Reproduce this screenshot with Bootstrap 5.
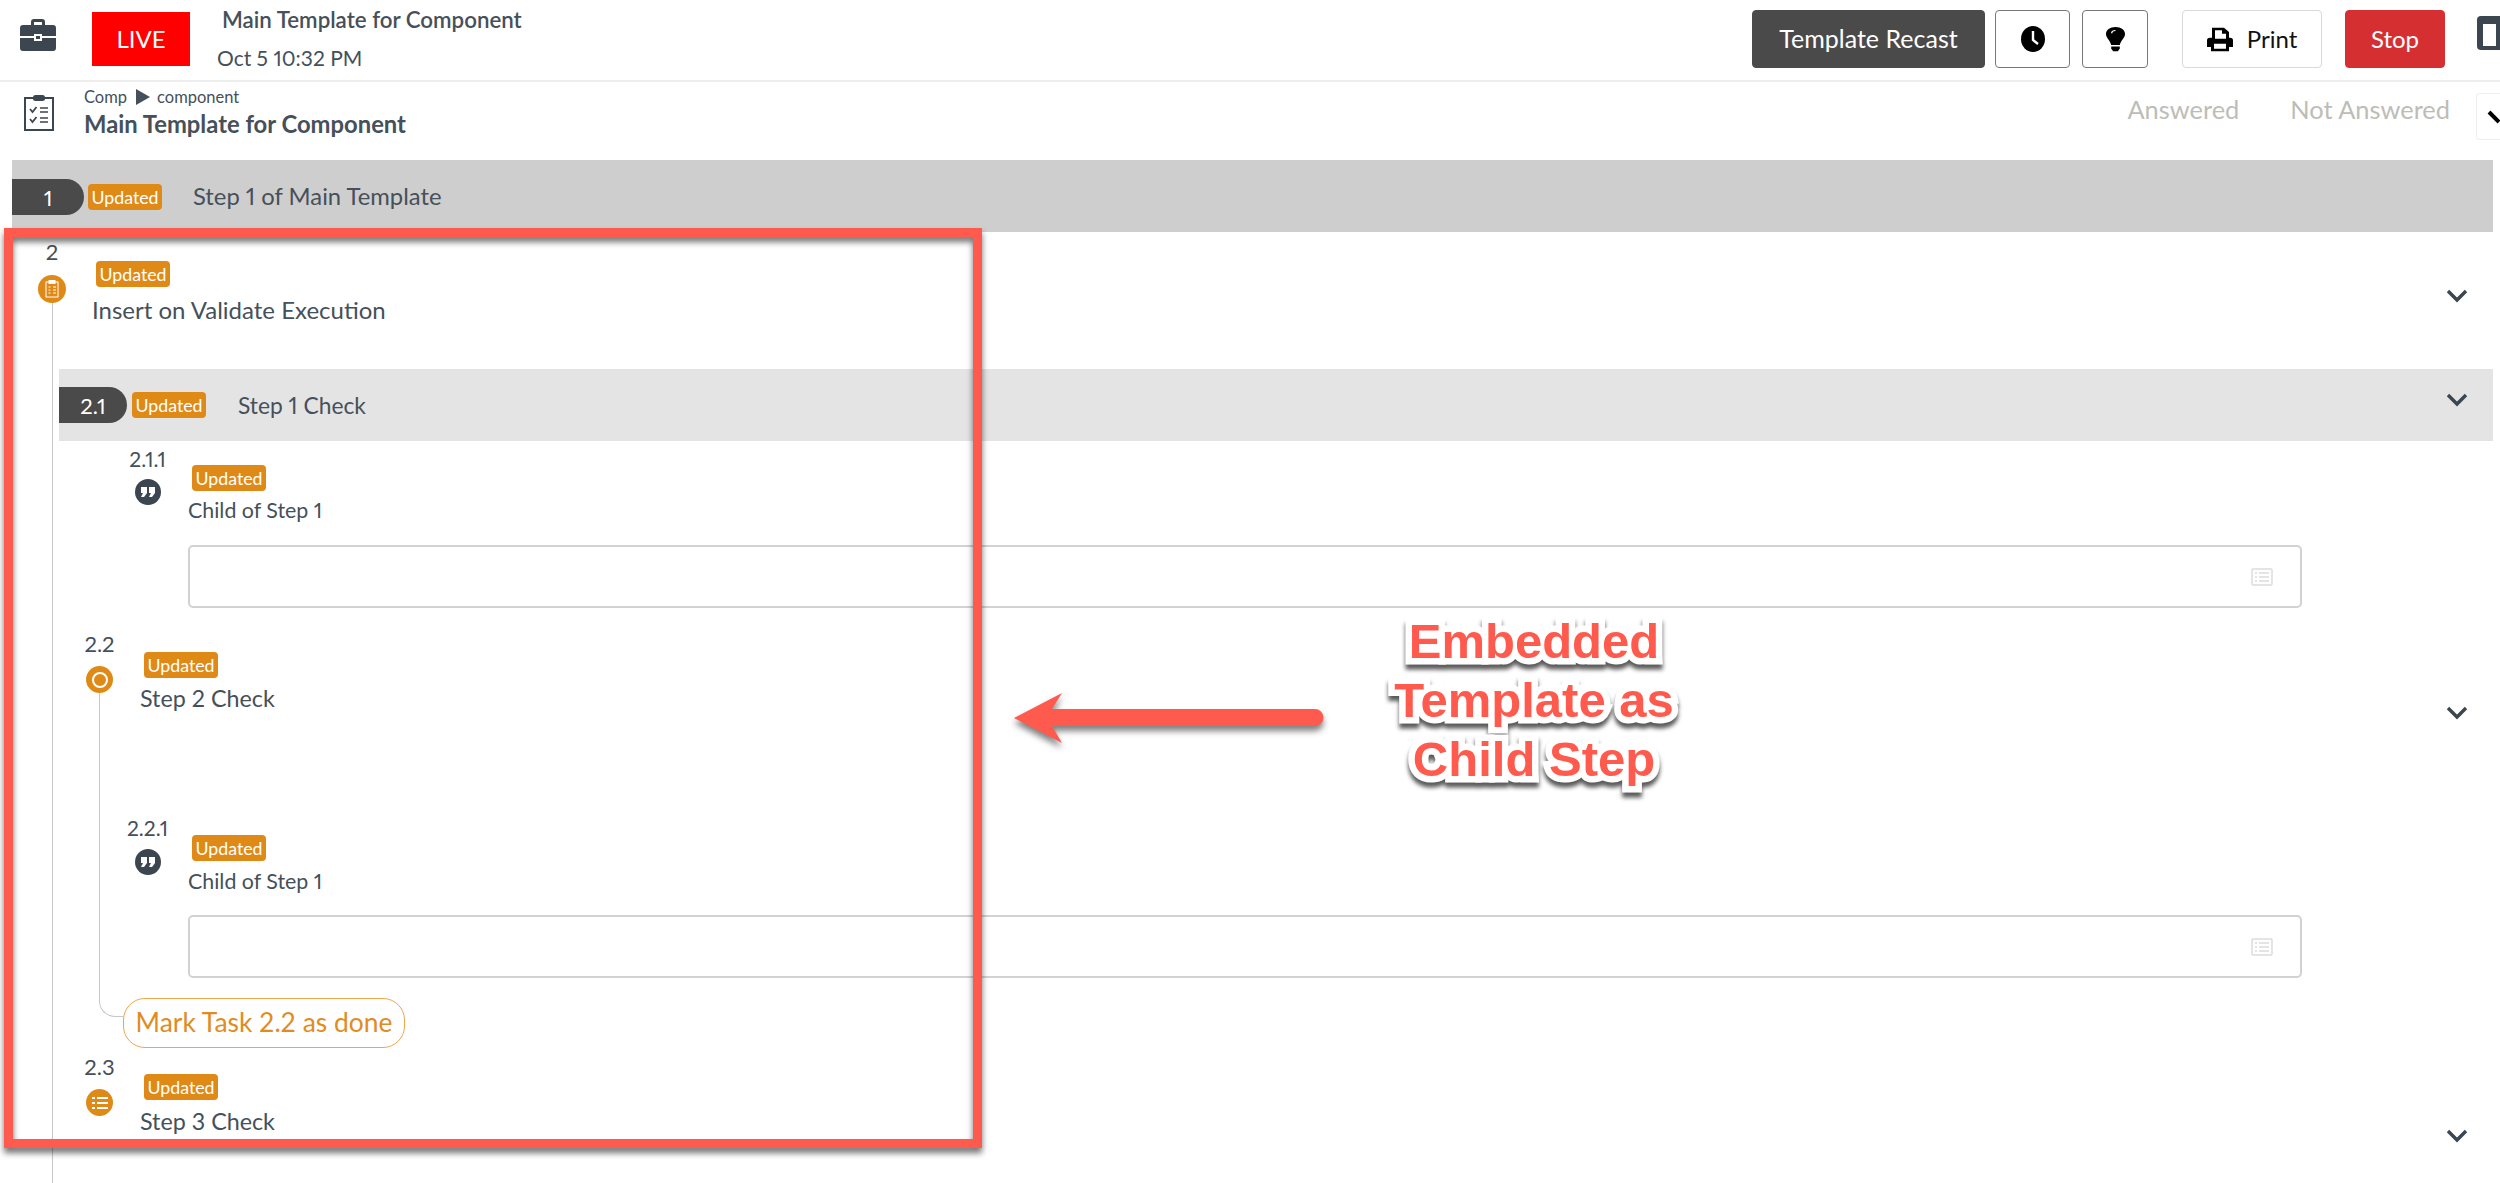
<!doctype html>
<html lang="en"><head><meta charset="utf-8"><title>Main Template for Component</title>
<link href="https://cdn.jsdelivr.net/npm/bootstrap@5.3.0/dist/css/bootstrap.min.css" rel="stylesheet">
<style>
html,body{height:1183px;overflow:hidden;background:#fff}
body{font-family:"Lato","Open Sans",sans-serif;color:#46505a;position:relative;font-variant-numeric:proportional-nums}
.topbar{height:82px;border-bottom:2px solid #eee;padding:10px 0 0 20px}
.live-box{width:98px;height:54px;background:#f00;color:#fff;font-size:24px;margin:2px 0 0 36px}
.run-title{font-size:22.3px;font-weight:600;line-height:26px;margin:-3px 0 0 32px}
.run-date{font-size:21px;line-height:26px;margin:12px 0 0 27px}
.tbtn{height:58px;font-size:24px;border-radius:4px;padding:0;display:flex;align-items:center;justify-content:center}
.tb-recast{width:233px;background:#4a4a4a;color:#fff;border:1px solid #4a4a4a;font-size:25px}
.tb-icon{background:#fff;border:1px solid #777}
.tb-print{width:140px;background:#fff;border:1px solid #d9d9d9;color:#111;gap:14px}
.tb-stop{width:100px;background:#d62f32;border:1px solid #d62f32;color:#fff}
.subhead{height:78px;padding:12px 0 0 24px}
.crumb{font-size:16.5px;line-height:20px;margin-top:-7px}
.crumb-tri{width:0;height:0;border-left:14px solid #46505a;border-top:8px solid transparent;border-bottom:8px solid transparent;margin:0 7px 0 9px}
.tmpl-title{font-size:23.8px;font-weight:700;line-height:28px;margin-top:3px}
.filter-txt{color:#bdbdb8;font-size:25.4px;line-height:30px}
.corner-box{width:24px;height:47px;margin:-1px 0 0 26px;border:1px solid #eee;border-right:0;border-radius:4px 0 0 4px}
.frame-main{margin:0 7px 0 12px;position:relative}
.head-bar{display:flex;align-items:center}
.hb-1{height:72px;background:#cecece;padding-top:2px}
.hb-2{height:72px;background:#e4e4e4;margin-left:47px}
.num-pill{background:#4a4a4a;color:#fff;height:36px;border-radius:0 18px 18px 0;display:flex;align-items:center;justify-content:center;font-size:22px}
.upd{background:#df8a16;color:#fff;font-size:17.8px;line-height:26px;height:26px;width:74px;text-align:center;border-radius:4px;flex:none;display:block}
.head-title{font-size:22.8px}
.hb-1 .head-title{font-size:23.8px}
.main-line{position:absolute;left:40px;top:143px;width:1px;background:#c8c8c8;height:880px}
.num-col{width:80px;flex:none;text-align:center}
.num-txt{font-size:22px;line-height:26px}
.ic-circle{border-radius:50%;display:flex;align-items:center;justify-content:center;margin-left:auto;margin-right:auto;position:relative}
.ic-or{background:#df8a16;width:28px;height:28px}
.ic-sm{background:#df8a16;width:27px;height:27px}
.ic-dark{background:#3c4650;width:26px;height:26px}
.step-title{font-size:23.3px;line-height:26px}
.title-lg{font-size:24px}
.sub-title{font-size:21.4px;line-height:26px}
.step-2{height:137px}
.nest{margin-left:47px;position:relative}
.leaf{margin-left:48px}
.leaf .num-col{width:81px}
.leaf .num-txt{font-size:21px;line-height:24px}
.leaf-body{flex:1;margin-right:191px}
.check-box{height:63px;border:2px solid #d2d2d2;border-radius:5px;margin-top:21px;padding-right:27px}
.sub-step .num-col{width:81px}
.chev{flex:none;display:block}
.branch{position:absolute;left:40px;top:61px;width:24px;height:325px;border-left:1.5px solid #c8c8c8;border-bottom:1.5px solid #c8c8c8;border-bottom-left-radius:16px}
.mark-btn{height:50px;width:282px;margin:20px 0 0 64px;border:1px solid #eda64a;border-radius:22px;color:#e08c1e;font-size:26.4px;background:#fff;padding:0;position:relative;display:block}
.red-frame{position:absolute;left:4px;top:228px;width:978px;height:920px;border:9px solid #ff5a4e;filter:drop-shadow(0 5px 3px rgba(0,0,0,.55));pointer-events:none}
.red-arrow{position:absolute;left:1012px;top:688px;filter:drop-shadow(0 5px 3px rgba(0,0,0,.5))}
.callout{position:absolute;left:1334px;top:612px;width:400px;text-align:center;font-family:"Liberation Sans",Arial,sans-serif;font-weight:700;font-size:49px;line-height:59px;color:#ff5a4e;-webkit-text-stroke:13px #fff;paint-order:stroke fill;filter:drop-shadow(0 5px 2px rgba(0,0,0,.65))}
</style></head>
<body>
<header class="topbar d-flex">
  <svg class="mt-2" width="36" height="33" viewBox="0 0 36 33" fill="#3c4650" aria-hidden="true"><path d="M11 7V4a3 3 0 0 1 3-3h8a3 3 0 0 1 3 3v3h-3V4h-8v3z"/><path d="M3 7h30a3 3 0 0 1 3 3v8H22v-2h-8v2H0v-8a3 3 0 0 1 3-3z"/><path d="M0 20h14v3h8v-3h14v10a3 3 0 0 1-3 3H3a3 3 0 0 1-3-3z"/><rect x="16" y="18" width="4" height="3"/></svg>
  <div class="live-box d-flex align-items-center justify-content-center">LIVE</div>
  <div>
    <div class="run-title">Main Template for Component</div>
    <div class="run-date">Oct 5 10:32 PM</div>
  </div>
  <div class="ms-auto d-flex">
    <button class="btn tbtn tb-recast">Template Recast</button>
    <button class="btn tbtn tb-icon" style="width:75px;margin-left:10px" aria-label="History"><svg width="24" height="26" viewBox="0 0 24 26"><ellipse cx="12" cy="13" rx="12" ry="13" fill="#000"/><path d="M12 5v9l5 4" stroke="#fff" stroke-width="2.4" fill="none"/></svg></button>
    <button class="btn tbtn tb-icon" style="width:66px;margin-left:12px" aria-label="Hint"><svg width="19" height="25" viewBox="0 0 20 36" preserveAspectRatio="none" fill="#000"><path d="M10 0C4 0 0 4.500 0 10c0 6 4.500 9 5.500 16h9C15.500 19 20 16 20 10 20 4.500 16 0 10 0z"/><path d="M5.500 28h9v3l-2 4h-5l-2-4z"/><path d="M6 9c0-2.500 2-4 4-4" stroke="#fff" stroke-width="1.500" fill="none"/></svg></button>
    <button class="btn tbtn tb-print" style="margin-left:34px"><svg width="26" height="25" viewBox="0 0 26 30" preserveAspectRatio="none" fill="#000"><path fill-rule="evenodd" d="M5 1h12l5 5v7h1a3 3 0 0 1 3 3v8h-4v5H4v-5H0v-8a3 3 0 0 1 3-3h2zM8 4v10h11V8h-4V4zM7 20v6h12v-6z"/></svg>Print</button>
    <button class="btn tbtn tb-stop" style="margin-left:23px">Stop</button>
    <svg style="margin:6px 0 0 32px" width="23" height="34" viewBox="0 0 23 34" aria-hidden="true"><path d="M23 0H4a4 4 0 0 0-4 4v26a4 4 0 0 0 4 4h19z" fill="#3c4650"/><rect x="6" y="8" width="13" height="22" fill="#fff"/></svg>
  </div>
</header>
<section class="subhead d-flex">
  <svg width="30" height="37" viewBox="0 0 30 37" fill="none" stroke="#3c4650" aria-hidden="true"><rect x="1" y="4" width="28" height="32" stroke-width="2"/><rect x="9" y="1" width="12" height="6" rx="2.500" fill="#3c4650" stroke="none"/><path d="M6 15l2.500 3 4-5M6 25l2.500 3 4-5" stroke-width="1.800"/><path d="M16 14h8M16 18h8M16 24h8M16 28h8" stroke-width="1.500"/></svg>
  <div style="margin-left:30px">
    <div class="crumb d-flex align-items-center">Comp<span class="crumb-tri"></span>component</div>
    <div class="tmpl-title">Main Template for Component</div>
  </div>
  <div class="ms-auto d-flex align-items-start">
    <span class="filter-txt">Answered</span>
    <span class="filter-txt" style="margin-left:51px">Not Answered</span>
    <div class="corner-box"><svg width="23" height="45" viewBox="0 0 23 45"><path d="M12 18l10 10" stroke="#000" stroke-width="4" fill="none"/></svg></div>
  </div>
</section>
<main class="frame-main">
  <div class="head-bar hb-1">
    <div class="num-pill" style="width:72px">1</div>
    <span class="upd ms-1">Updated</span>
    <span class="head-title" style="margin-left:31px">Step 1 of Main Template</span>
  </div>
  <div class="main-line"></div>
  <div class="step-2 d-flex">
    <div class="num-col" style="padding-top:7px">
      <div class="num-txt">2</div>
      <div class="ic-circle ic-or" style="margin-top:10px"><svg width="14" height="18" viewBox="0 0 14 18" fill="none" stroke="#fff"><rect x="1" y="2" width="12" height="15"/><rect x="4" y=".5" width="6" height="3" fill="#fff"/><path d="M3.500 7h2M8 7h3M3.500 10h2M8 10h3M3.500 13h2M8 13h3"/></svg></div>
    </div>
    <div style="padding-top:29px">
      <span class="upd" style="margin-left:4px">Updated</span>
      <div class="step-title title-lg" style="margin-top:10px">Insert on Validate Execution</div>
    </div>
    <svg class="chev ms-auto" style="margin:57px 25px 0 0" width="22" height="14" viewBox="0 0 22 14"><path d="M2 2l9 9 9-9" stroke="#3c4650" stroke-width="3.400" fill="none"/></svg>
  </div>
  <div class="head-bar hb-2">
    <div class="num-pill" style="width:68px">2.1</div>
    <span class="upd" style="margin-left:5px">Updated</span>
    <span class="head-title" style="margin-left:32px">Step 1 Check</span>
    <svg class="chev ms-auto" style="margin:-10px 25px 0 0" width="22" height="14" viewBox="0 0 22 14"><path d="M2 2l9 9 9-9" stroke="#3c4650" stroke-width="3.400" fill="none"/></svg>
  </div>
  <div class="nest">
    <div class="leaf d-flex" style="padding-top:6px">
      <div class="num-col">
        <div class="num-txt">2.1.1</div>
        <div class="ic-circle ic-dark" style="margin-top:8px"><svg width="16" height="12" viewBox="0 0 16 12" fill="#fff"><path d="M1 1h6v6l-3 4H1l2-4H1zM9 1h6v6l-3 4H9l2-4H9z"/></svg></div>
      </div>
      <div class="leaf-body" style="padding-top:18px">
        <span class="upd" style="margin-left:4px">Updated</span>
        <div class="sub-title" style="margin-top:6px">Child of Step 1</div>
        <div class="check-box d-flex align-items-center justify-content-end" style="margin-top:22px"><svg width="22" height="18" viewBox="0 0 22 18" fill="none" stroke="#dcdcdc" stroke-width="1.500"><rect x="1" y="1" width="20" height="16" rx="1"/><path d="M4 5h2M8 5h10M4 9h2M8 9h10M4 13h2M8 13h10"/></svg></div>
      </div>
    </div>
    <div class="sub-step position-relative" style="margin-top:23px">
      <div class="branch"></div>
      <div class="d-flex">
        <div class="num-col">
          <div class="num-txt">2.2</div>
          <div class="ic-circle ic-sm" style="margin-top:9px"><span class="d-block rounded-circle" style="width:16px;height:16px;border:2.500px solid #fff"></span></div>
        </div>
        <div style="padding-top:21px">
          <span class="upd" style="margin-left:4px">Updated</span>
          <div class="step-title" style="margin-top:7px">Step 2 Check</div>
        </div>
        <svg class="chev ms-auto" style="margin:75px 25px 0 0" width="22" height="14" viewBox="0 0 22 14"><path d="M2 2l9 9 9-9" stroke="#3c4650" stroke-width="3.400" fill="none"/></svg>
      </div>
      <div class="leaf d-flex" style="margin-top:96px">
        <div class="num-col">
          <div class="num-txt">2.2.1</div>
          <div class="ic-circle ic-dark" style="margin-top:9px"><svg width="16" height="12" viewBox="0 0 16 12" fill="#fff"><path d="M1 1h6v6l-3 4H1l2-4H1zM9 1h6v6l-3 4H9l2-4H9z"/></svg></div>
        </div>
        <div class="leaf-body" style="padding-top:19px">
          <span class="upd" style="margin-left:4px">Updated</span>
          <div class="sub-title" style="margin-top:7px">Child of Step 1</div>
          <div class="check-box d-flex align-items-center justify-content-end"><svg width="22" height="18" viewBox="0 0 22 18" fill="none" stroke="#dcdcdc" stroke-width="1.500"><rect x="1" y="1" width="20" height="16" rx="1"/><path d="M4 5h2M8 5h10M4 9h2M8 9h10M4 13h2M8 13h10"/></svg></div>
        </div>
      </div>
      <button class="btn mark-btn">Mark Task 2.2 as done</button>
    </div>
    <div class="sub-step d-flex" style="margin-top:6px">
      <div class="num-col">
        <div class="num-txt">2.3</div>
        <div class="ic-circle ic-sm" style="margin-top:9px"><svg width="16" height="14" viewBox="0 0 16 14" fill="none" stroke="#fff" stroke-width="2"><path d="M5 2h11M5 7h11M5 12h11"/><path d="M0 2h3M0 7h3M0 12h3"/></svg></div>
      </div>
      <div style="padding-top:20px">
        <span class="upd" style="margin-left:4px">Updated</span>
        <div class="step-title" style="margin-top:8px">Step 3 Check</div>
      </div>
      <svg class="chev ms-auto" style="margin:75px 25px 0 0" width="22" height="14" viewBox="0 0 22 14"><path d="M2 2l9 9 9-9" stroke="#3c4650" stroke-width="3.400" fill="none"/></svg>
    </div>
  </div>
</main>
<div class="red-frame"></div>
<svg class="red-arrow" width="320" height="62" viewBox="0 0 320 62" aria-hidden="true"><path d="M2 30L50 5 40 21H303a8.500 8.500 0 0 1 0 17H40l10 17z" fill="#ff5a4e"/></svg>
<div class="callout">Embedded<br>Template as<br>Child Step</div>
</body></html>
